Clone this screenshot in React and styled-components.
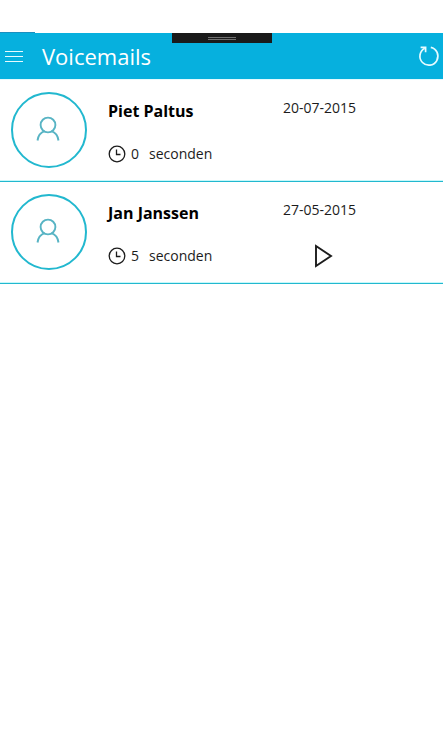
import React from 'react';
import styled, { createGlobalStyle } from 'styled-components';

const voicemails = [
  { id: 1, name: 'Piet Paltus', date: '20-07-2015', seconds: 0 },
  { id: 2, name: 'Jan Janssen', date: '27-05-2015', seconds: 5 },
];

const App = () => {
  return (
    <Page>
      <GlobalStyle />
      <StatusBar>
        <StatusAccent />
      </StatusBar>
      <Header>
        <IconButton type="button" aria-label="Menu">
          <svg width="20" height="14" viewBox="0 0 20 14" stroke="currentColor" strokeWidth="1">
            <path d="M1 2.5h18M1 7.5h18M1 12.5h18" />
          </svg>
        </IconButton>
        <Title>Voicemails</Title>
        <IconButton type="button" aria-label="Refresh">
          <svg width="22" height="22" viewBox="0 0 22 22" fill="none" stroke="currentColor" strokeWidth="1.7">
            <path d="M12.8 2.4A9 9 0 1 1 6.8 3.2" />
            <path d="M2.6 2.4H7.6V7.2" />
          </svg>
        </IconButton>
        <PullTab>
          <Grip />
        </PullTab>
      </Header>
      <List>
        {voicemails.map((item) => (
          <Row key={item.id}>
            <Avatar>
              <svg width="24" height="28" viewBox="0 0 24 28" fill="none" stroke="currentColor" strokeWidth="1.9">
                <circle cx="12" cy="9" r="7.4" />
                <path d="M1.5 24.5C2.2 19.5 4.8 16.4 8.6 15.2M15.4 15.2C19.2 16.4 21.8 19.5 22.5 24.5" />
              </svg>
            </Avatar>
            <Details>
              <Name>{item.name}</Name>
              <Duration>
                <svg width="18" height="18" viewBox="0 0 18 18" fill="none" stroke="currentColor" strokeWidth="1.3">
                  <circle cx="9" cy="9" r="7.8" />
                  <path d="M8.5 4.5V9.5H12.5" />
                </svg>
                <Count>{item.seconds}</Count>
                <span>seconden</span>
              </Duration>
            </Details>
            <Actions>
              <time>{item.date}</time>
              {item.seconds > 0 && (
                <PlayButton type="button" aria-label={`Play ${item.name}`}>
                  <svg width="20" height="24" viewBox="0 0 20 24" fill="none" stroke="currentColor" strokeWidth="1.9">
                    <path d="M3 2V22L18 12Z" />
                  </svg>
                </PlayButton>
              )}
            </Actions>
          </Row>
        ))}
      </List>
    </Page>
  );
}

const GlobalStyle = createGlobalStyle`
  * {
    box-sizing: border-box;
  }

  body {
    margin: 0;
    background: #fff;
    color: #1c1c1c;
    font-family: 'Open Sans', 'Noto Sans', sans-serif;
  }

  svg {
    display: block;
  }
`;

const Page = styled.div`
  min-height: 100vh;
  background: #fff;
`;

const StatusBar = styled.div`
  display: flex;
  align-items: flex-end;
  height: 33px;
`;

const StatusAccent = styled.div`
  width: 35px;
  height: 1px;
  background: #1a8fc0;
`;

const Header = styled.header`
  position: relative;
  display: flex;
  align-items: center;
  height: 46px;
  padding: 0 3px 0 4px;
  background: #06b0de;
  color: #fff;
`;

const IconButton = styled.button`
  padding: 0;
  border: 0;
  background: none;
  color: #e6fbff;
  cursor: pointer;
`;

const Title = styled.h1`
  flex: 1;
  margin: 0;
  padding-left: 18px;
  font-size: 22px;
  font-weight: 400;
  line-height: 32px;
`;

const PullTab = styled.div`
  position: absolute;
  top: 0;
  left: 50%;
  display: flex;
  justify-content: center;
  align-items: center;
  width: 100px;
  height: 10px;
  margin-left: -50px;
  background: #1a1a1a;
`;

const Grip = styled.div`
  width: 28px;
  height: 3px;
  border: solid #6f6f6f;
  border-width: 1px 0;
`;

const List = styled.ul`
  margin: 0;
  padding: 0;
  border-top: 1px solid #e4fafe;
  list-style: none;
`;

const Row = styled.li`
  display: grid;
  grid-template-columns: 76px 1fr 160px;
  height: 102px;
  padding: 12px 0 0 11px;
  border-bottom: 1px solid #22b8cf;
  box-shadow: inset 0 -1px 0 #c6f8fa;
`;

const Avatar = styled.div`
  display: flex;
  justify-content: center;
  align-items: center;
  width: 76px;
  height: 76px;
  padding-right: 2px;
  border: 2px solid #22b8cf;
  border-radius: 50%;
  color: #58b4c4;
`;

const Details = styled.div`
  padding: 7px 0 0 21px;
`;

const Name = styled.h2`
  margin: 0;
  font-size: 16px;
  font-weight: 700;
  line-height: 24px;
  color: #000;
`;

const Duration = styled.div`
  display: flex;
  align-items: center;
  margin-top: 21px;
  font-size: 14px;
  line-height: 20px;
`;

const Count = styled.span`
  width: 18px;
  margin-left: 5px;
`;

const Actions = styled.div`
  display: flex;
  flex-direction: column;
  align-items: center;
  width: 80px;
  padding-top: 6px;
  font-size: 14px;
  line-height: 20px;

  time {
    align-self: flex-start;
  }
`;

const PlayButton = styled.button`
  margin-top: 24px;
  padding: 0;
  border: 0;
  background: none;
  color: #1c1c1c;
  cursor: pointer;
`;

export default App;
